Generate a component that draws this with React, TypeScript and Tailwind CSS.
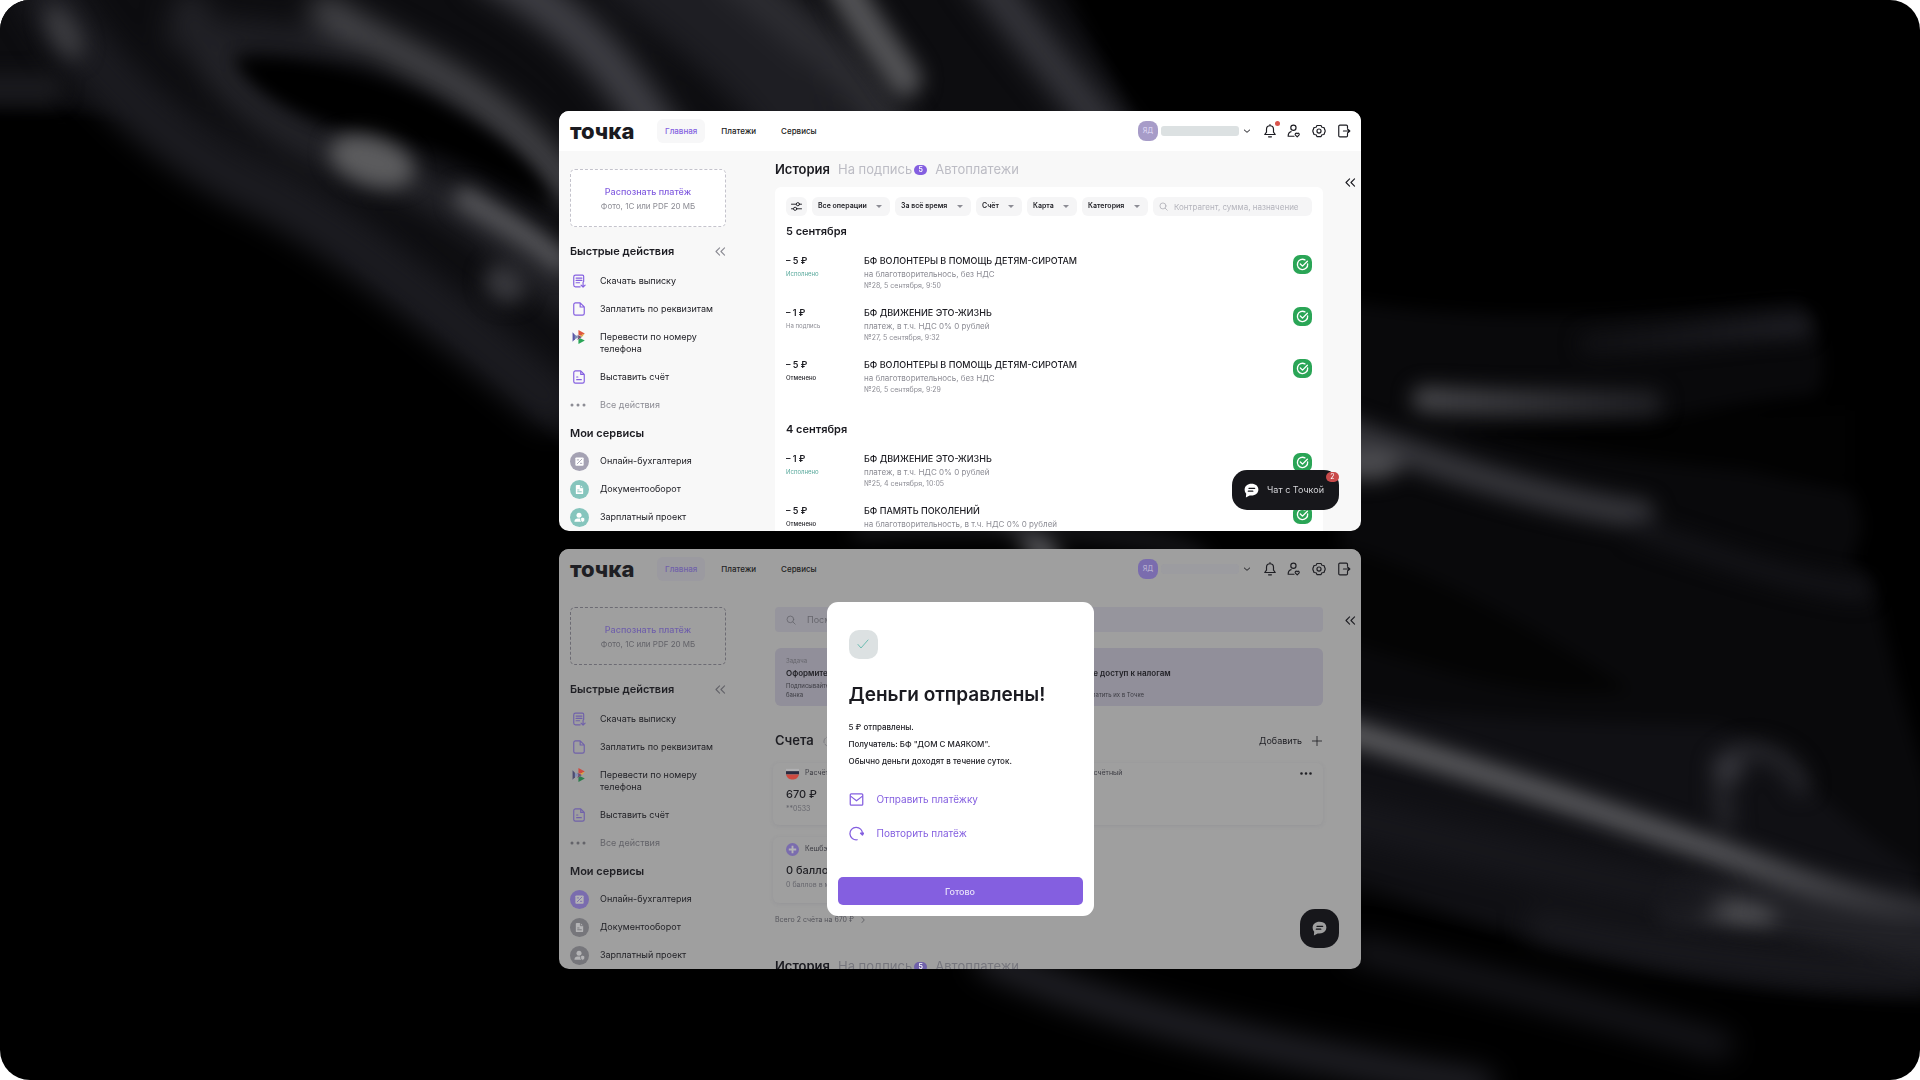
import React from "react";

const purple = "text-[var(--accent)]";

const lightTheme =
  "bg-[#f8f8f8] text-[#1b1b21] [--bar:#ffffff] [--pill:#f7f7f8] [--box:#ffffff] [--accent:#845fe0] [--muted:#8c8c94] [--faint:#bcbcc4] [--dash:#c4c3cc] [--avatar:#a79cc8] [--avatartext:#d9d2f0] [--mask:#dce1e2] [--s1:#a5a2b3] [--s2:#86c5bd] [--glyph:#ffffff] [--r:#e0573f] [--g:#2aa556] [--b:#5b57a6]";
const dimTheme =
  "bg-[#9f9f9f] text-[#1f1f24] [--bar:#9f9f9f] [--pill:#9b9aa0] [--box:#9f9f9f] [--accent:#7061aa] [--muted:#636369] [--faint:#77777e] [--dash:#6c6b73] [--avatar:#7a6cae] [--avatartext:#b5aed0] [--mask:#9c9ca0] [--s1:#7a6cae] [--s2:#76767b] [--glyph:#b4b4b6] [--r:#cf4a40] [--g:#2b7d4c] [--b:#4d4b70]";

type IconProps = { className?: string; children: React.ReactNode; box?: string };
function Icon({ className = "size-[14px]", box = "0 0 24 24", children }: IconProps) {
  return (
    <svg aria-hidden="true" viewBox={box} className={"shrink-0 " + className} fill="none" stroke="currentColor" strokeWidth="2" strokeLinecap="round" strokeLinejoin="round">
      {children}
    </svg>
  );
}

function Blur({ id, amount }: { id: string; amount: number }) {
  return (
    <filter id={id} filterUnits="userSpaceOnUse" x="-100" y="-100" width="2120" height="1280" colorInterpolationFilters="sRGB">
      <feGaussianBlur stdDeviation={amount} />
    </filter>
  );
}

function Backdrop() {
  return (
    <svg aria-hidden="true" className="absolute inset-0 size-full" viewBox="0 0 1920 1080" preserveAspectRatio="xMidYMid slice" fill="none" strokeLinecap="round">
      <defs>
        <Blur id="edge" amount={8} />
        <Blur id="soft" amount={10} />
        <Blur id="mid" amount={14} />
        <linearGradient id="beam" gradientUnits="userSpaceOnUse" x1="1361" y1="736" x2="1920" y2="910">
          <stop offset="0" stopColor="#5c5c5f" /><stop offset="0.65" stopColor="#56565a" /><stop offset="1" stopColor="#2f2f34" />
        </linearGradient>
        <linearGradient id="glow" gradientUnits="userSpaceOnUse" x1="1400" y1="0" x2="1680" y2="0">
          <stop offset="0" stopColor="#4a4a4e" /><stop offset="1" stopColor="#1c1c20" />
        </linearGradient>
        <linearGradient id="ray" gradientUnits="userSpaceOnUse" x1="1570" y1="0" x2="1810" y2="0">
          <stop offset="0" stopColor="#101013" /><stop offset="1" stopColor="#202026" />
        </linearGradient>
      </defs>
      <g filter="url(#edge)">
        <path d="M-20 -20H1060L1140 130L1000 180H570V450C500 370 430 320 350 260C280 200 200 125 110 112L-20 108Z" fill="#0d0d10" />
        <path d="M1340 300C1500 325 1620 315 1800 300C1825 330 1828 380 1815 395C1740 400 1680 420 1620 422C1700 470 1790 478 1850 490C1868 520 1862 540 1850 560C1880 575 1880 620 1890 650C1900 700 1930 780 1930 800V1000C1700 1000 1500 930 1340 890Z" fill="#09090b" />
        <path d="M1340 700C1500 725 1640 722 1720 726C1800 760 1830 820 1920 870V990C1700 1000 1500 930 1340 870Z" fill="#101014" />
        <path d="M1340 545C1440 575 1540 630 1630 690C1540 705 1440 670 1340 640Z" fill="#040404" />
        <path d="M1450 430C1560 425 1640 420 1700 415L1850 410V478C1700 470 1560 450 1450 430Z" fill="#020202" />
      </g>
      <g filter="url(#mid)">
        <path d="M45 -10C85 60 150 130 240 180C310 210 380 260 550 400" stroke="#1b1b20" strokeWidth="54" />
        <path d="M190 10C210 80 280 140 380 170C440 190 500 230 570 300" stroke="#242429" strokeWidth="36" />
        <path d="M180 35C240 30 290 45 350 45" stroke="#202025" strokeWidth="30" />
        <path d="M325 10C400 60 490 80 570 190" stroke="#48484c" strokeWidth="30" />
        <path d="M490 -30C580 20 620 70 670 150" stroke="#3f3f45" strokeWidth="42" />
        <path d="M640 -30C720 30 780 80 820 150" stroke="#1e1e23" strokeWidth="80" />
        <path d="M730 -30C790 20 860 70 900 150" stroke="#2d2d32" strokeWidth="40" />
        <path d="M980 -30C1030 40 1060 70 1120 150" stroke="#36363c" strokeWidth="36" />
      </g>
      <g filter="url(#edge)">
        <path d="M235 58C300 55 390 75 450 112C520 150 545 180 552 210C500 180 450 150 400 140C340 130 260 105 235 58Z" fill="#000" />
      </g>
      <g filter="url(#soft)">
        <path d="M835 -30C860 20 890 55 905 80" stroke="#525255" strokeWidth="34" />
        <ellipse cx="64" cy="32" rx="14" ry="30" fill="#3c3c40" transform="rotate(-30 64 32)" />
        <ellipse cx="372" cy="161" rx="44" ry="24" fill="#5c5c5e" transform="rotate(18 372 161)" />
        <path d="M465 198C500 220 530 235 560 262" stroke="#58585c" strokeWidth="22" />
        <ellipse cx="505" cy="284" rx="22" ry="18" fill="#38383d" transform="rotate(35 505 284)" />
        <path d="M-30 88H50" stroke="#1b1b1f" strokeWidth="26" />
        <path d="M1590 344C1670 340 1740 328 1800 326" stroke="url(#ray)" strokeWidth="22" />
        <path d="M1425 399C1500 404 1570 402 1650 403" stroke="url(#glow)" strokeWidth="26" />
        <path d="M1340 430C1440 465 1540 500 1640 514" stroke="#333338" strokeWidth="30" />
        <ellipse cx="1368" cy="464" rx="34" ry="16" fill="#4b4b4f" />
        <path d="M1640 530C1700 550 1780 580 1860 590" stroke="#131317" strokeWidth="22" />
        <path d="M1726 820C1715 770 1730 745 1760 752C1785 758 1795 770 1800 785" stroke="#242429" strokeWidth="20" />
        <ellipse cx="1728" cy="768" rx="16" ry="16" fill="#34343a" />
        <path d="M1680 905C1760 900 1830 925 1950 955" stroke="#212126" strokeWidth="46" />
        <path d="M1320 724C1500 775 1660 832 1790 877C1840 893 1880 905 1950 914" stroke="url(#beam)" strokeWidth="24" />
        <ellipse cx="1736" cy="913" rx="42" ry="12" fill="#4f4f53" transform="rotate(8 1736 913)" />
        <path d="M1010 515L1050 560" stroke="#5c5c60" strokeWidth="22" />
        <path d="M860 530C960 520 1180 530 1200 560" stroke="#1a1a1e" strokeWidth="16" />
      </g>
      <g filter="url(#mid)">
        <path d="M1340 815C1480 850 1600 880 1700 900" stroke="#17171c" strokeWidth="40" />
        <path d="M1540 925C1640 950 1780 970 1960 975" stroke="#1b1b20" strokeWidth="26" />
        <path d="M1360 950C1480 980 1600 1010 1720 1045" stroke="#17171c" strokeWidth="26" />
        <path d="M990 960C1100 1010 1260 1050 1480 1085" stroke="#212127" strokeWidth="30" />
      </g>
    </svg>
  );
}

function Header({ alert }: { alert?: boolean }) {
  return (
    <header className="flex h-10 shrink-0 items-center bg-[var(--bar)] pl-[11px] pr-[10px]">
      <a href="#home" className="w-[87px] text-[22px] font-extrabold leading-6">точка</a>
      <nav className="flex items-center text-[8px] font-medium leading-6">
        <a href="#main" className={"rounded-md bg-[var(--pill)] px-2 " + purple}>Главная</a>
        <a href="#payments" className="ml-4">Платежи</a>
        <a href="#services" className="ml-[25px]">Сервисы</a>
      </nav>
      <div className="ml-auto flex items-center">
        <span className="flex size-5 items-center justify-center rounded-[8px] bg-[var(--avatar)] text-[7px] font-medium text-[var(--avatartext)]">ЯД</span>
        <span className="ml-[3px] h-[10px] w-[78px] rounded-[3px] bg-[var(--mask)]" />
        <button aria-label="Профиль" className="ml-1"><Icon className="size-2"><path d="m4 9 8 7 8-7" strokeWidth="3" /></Icon></button>
        <button aria-label="Уведомления" className="relative ml-[12px]">
          <Icon><path d="M12 3a6 6 0 0 0-6 6v5l-3 4h18l-3-4V9a6 6 0 0 0-6-6ZM12 1v2M9.500 22h5" /></Icon>
          {alert && <span className="absolute -right-[3px] -top-[3px] size-[5px] rounded-full bg-[#d9534a]" />}
        </button>
        <button aria-label="Сотрудники" className="ml-[10px]">
          <Icon><circle cx="11" cy="6.500" r="4.500" /><path d="M7 13c-4 1-5 4-5 8h10M17.500 22l-3-3c-1.500-2 1-4.500 3-2.500 2-2 4.500.5 3 2.500Z" /></Icon>
        </button>
        <button aria-label="Настройки" className="ml-[11px]">
          <Icon><path d="M8.500 2.500h7l1.500 3 3.500.5 2 5v2l-2 5-3.500.5-1.500 3h-7l-1.500-3-3.500-.5-2-5v-2l2-5 3.500-.5Z" /><circle cx="12" cy="12" r="3.500" /></Icon>
        </button>
        <button aria-label="Выйти" className="ml-[11px]">
          <Icon><path d="M18 7V4a2 2 0 0 0-2-2H5a2 2 0 0 0-2 2v16a2 2 0 0 0 2 2h11a2 2 0 0 0 2-2v-3M11 12h11M18 8.500l4 3.500-4 3.500" /></Icon>
        </button>
      </div>
    </header>
  );
}

function Chevrons({ className }: { className?: string }) {
  return <Icon className={className} box="0 0 24 20"><path d="M10 2 2 10l8 8M21 2l-8 8 8 8" strokeWidth="2.500" /></Icon>;
}

const quick = [
  { label: "Скачать выписку", icon: <Icon className={"size-[14px] " + purple}><path d="M20 13V4a2 2 0 0 0-2-2H6a3 3 0 0 0-3 3v14a3 3 0 0 0 3 3h8M7 7h10M7 11h10M7 15h6M19 14v8M15.500 19l3.500 3.500 3.500-3.500" /></Icon> },
  { label: "Заплатить по реквизитам", icon: <Icon className={"size-[14px] " + purple}><path d="M14 1.500H6a3 3 0 0 0-3 3v15a3 3 0 0 0 3 3h12a3 3 0 0 0 3-3V8.500ZM14 1.500v7h7" /></Icon> },
  {
    label: "Перевести по номеру телефона",
    icon: (
      <svg aria-hidden="true" viewBox="0 0 24 24" className="size-[14px] shrink-0">
        <path d="M1 4v16l4-4V8Z" fill="var(--b)" /><path d="m5 8 7 4-7 4Z" fill="#7f8fb8" />
        <path d="M11 0v8l3 2 8-4Z" fill="var(--r)" /><path d="m14 10 8-4-5 6Z" fill="#e2a53c" />
        <path d="M11 24v-8l3-2 8 4Z" fill="var(--g)" /><path d="m9 8 8 4-8 5 2-5Z" fill="#6d4b70" />
      </svg>
    ),
  },
  { label: "Выставить счёт", icon: <Icon className={"size-[14px] " + purple}><path d="M15 1.500H6a3 3 0 0 0-3 3v15a3 3 0 0 0 3 3h12a3 3 0 0 0 3-3V7.500ZM15 1.500v6h6M8 12h2M8 16.500h8" /></Icon> },
];

const services = [
  { label: "Онлайн-бухгалтерия", tone: "bg-[var(--s1)]", icon: <><rect x="3" y="3" width="18" height="18" rx="2" fill="var(--glyph)" stroke="none" /><path d="m7 17 10-10M7 8.500h3M14 16h3" className="stroke-[var(--s1)]" /></> },
  { label: "Документооборот", tone: "bg-[var(--s2)]", icon: <><path d="M4 4a2 2 0 0 1 2-2h8l6 6v12a2 2 0 0 1-2 2H6a2 2 0 0 1-2-2Z" fill="var(--glyph)" stroke="none" /><path d="M14 3v5h5M8 13h3M8 17h8" className="stroke-[var(--s2)]" /></> },
  { label: "Зарплатный проект", tone: "bg-[var(--s2)]", icon: <><circle cx="11" cy="7" r="5.500" fill="var(--glyph)" stroke="none" /><path d="M1 21c0-6 4-7 10-7s6 1 6 7Z" fill="var(--glyph)" stroke="none" /><path d="M19 11.500 23.500 13v4c0 3-2 4.500-4.500 5.500-2.500-1-4.500-2.500-4.500-5.500v-4Z" fill="var(--glyph)" className="stroke-[var(--s2)]" /></> },
];

function Sidebar() {
  return (
    <aside className="ml-[11px] w-[156px] shrink-0 pt-[18px]">
      <button className="flex h-[58px] w-full flex-col items-center justify-center rounded-[5px] border border-dashed border-[var(--dash)] bg-[var(--box)] pt-0.5">
        <span className={"text-[9px] font-medium leading-[14px] " + purple}>Распознать платёж</span>
        <span className="text-[8px] leading-[14px] text-[var(--muted)]">Фото, 1С или PDF 20 МБ</span>
      </button>
      <div className="mb-1.5 mt-[14px] flex h-5 items-center justify-between">
        <h2 className="text-[11px] font-semibold">Быстрые действия</h2>
        <button aria-label="Свернуть" className="text-[var(--muted)]"><Chevrons className="h-[9px] w-[11px]" /></button>
      </div>
      <ul className="text-[9px] leading-3">
        {quick.map((q) => (
          <li key={q.label}>
            <a href="#action" className="flex items-start py-2">
              <span className="-my-px mr-[11px] flex w-[19px] shrink-0 justify-start pl-0.5">{q.icon}</span>
              <span>{q.label}</span>
            </a>
          </li>
        ))}
        <li>
          <a href="#all" className="flex items-center py-2 text-[var(--muted)]">
            <Icon className="mr-[14px] h-1 w-4" box="0 0 32 8"><path d="M4 4h.01M16 4h.01M28 4h.01" strokeWidth="6" /></Icon>
            Все действия
          </a>
        </li>
      </ul>
      <h2 className="mb-1 mt-1 text-[11px] font-semibold leading-5">Мои сервисы</h2>
      <ul className="text-[9px] leading-3">
        {services.map((s) => (
          <li key={s.label}>
            <a href="#service" className="flex h-7 items-center">
              <span className={"mr-[11px] flex size-[19px] items-center justify-center rounded-full " + s.tone}>
                <Icon className="size-[11px]">{s.icon}</Icon>
              </span>
              {s.label}
            </a>
          </li>
        ))}
      </ul>
    </aside>
  );
}

function Tabs() {
  return (
    <div className="flex h-[22px] shrink-0 items-center text-[13px] text-[var(--faint)]">
      <button className={"font-semibold text-[#1b1b21]"}>История</button>
      <button className="ml-2 flex items-center">
        На подпись
        <span className="ml-0.5 flex h-[10px] w-[13px] items-center justify-center rounded-[5px] bg-[var(--accent)] text-[7px] font-semibold text-white">5</span>
      </button>
      <button className="ml-2">Автоплатежи</button>
    </div>
  );
}

function Filter({ label }: { label: string }) {
  return (
    <span className="relative flex shrink-0">
      <select aria-label={label} className="h-[19px] appearance-none rounded-[6px] bg-[#f5f5f6] pl-[6px] pr-[23px] text-[7px] font-semibold">
        <option>{label}</option>
      </select>
      <svg aria-hidden="true" viewBox="0 0 12 6" className="pointer-events-none absolute right-2 top-2 h-[3px] w-[6px]"><path d="M0 0h12L6 6Z" fill="#8c8c94" /></svg>
    </span>
  );
}

function SearchIcon({ className }: { className: string }) {
  return <Icon className={className}><circle cx="10.500" cy="10.500" r="8" /><path d="m16.500 16.500 5.500 5.500" /></Icon>;
}

const days = [
  {
    title: "5 сентября",
    rows: [
      { sum: "– 5 ₽", status: "Исполнено", tone: "text-[#57a89b]", name: "БФ ВОЛОНТЕРЫ В ПОМОЩЬ ДЕТЯМ-СИРОТАМ", note: "на благотворительнось, без НДС", meta: "№28, 5 сентября, 9:50" },
      { sum: "– 1 ₽", status: "На подпись", tone: "text-[#8c8c94]", name: "БФ ДВИЖЕНИЕ ЭТО-ЖИЗНЬ", note: "платеж, в т.ч. НДС 0% 0 рублей", meta: "№27, 5 сентября, 9:32" },
      { sum: "– 5 ₽", status: "Отменено", tone: "text-[#1b1b21] font-medium", name: "БФ ВОЛОНТЕРЫ В ПОМОЩЬ ДЕТЯМ-СИРОТАМ", note: "на благотворительнось, без НДС", meta: "№26, 5 сентября, 9:29" },
    ],
  },
  {
    title: "4 сентября",
    rows: [
      { sum: "– 1 ₽", status: "Исполнено", tone: "text-[#57a89b]", name: "БФ ДВИЖЕНИЕ ЭТО-ЖИЗНЬ", note: "платеж, в т.ч. НДС 0% 0 рублей", meta: "№25, 4 сентября, 10:05" },
      { sum: "– 5 ₽", status: "Отменено", tone: "text-[#1b1b21] font-medium", name: "БФ ПАМЯТЬ ПОКОЛЕНИЙ", note: "на благотворительность, в т.ч. НДС 0% 0 рублей", meta: "" },
    ],
  },
];

function History() {
  return (
    <>
      <Tabs />
      <section className="mt-1.5 rounded-t-[6px] bg-white px-[11px] pt-[10px]">
        <div className="flex gap-[5px]">
          <button aria-label="Фильтры" className="flex h-[19px] w-[21px] items-center justify-center rounded-[6px] bg-[#f5f5f6]">
            <Icon className="size-[11px]"><path d="M1 7h10M19 7h4M1 17h4M13 17h10" /><circle cx="15" cy="7" r="3.500" /><circle cx="9" cy="17" r="3.500" /></Icon>
          </button>
          {["Все операции", "За всё время", "Счёт", "Карта", "Категория"].map((f) => <Filter key={f} label={f} />)}
          <label className="flex h-[19px] min-w-0 flex-1 items-center rounded-[6px] bg-[#f5f5f6] px-[6px] text-[#a9a9b1]">
            <SearchIcon className="mr-[6px] size-[9px]" />
            <input aria-label="Поиск по операциям" placeholder="Контрагент, сумма, назначение" className="min-w-0 flex-1 bg-transparent text-[8px] placeholder:text-[#b4b4bc] outline-none" />
          </label>
        </div>
        {days.map((d) => (
          <div key={d.title} className="mb-[22px]">
            <h3 className="mt-[5px] text-[11px] font-semibold leading-5">{d.title}</h3>
            <ul>
              {d.rows.map((r, i) => (
                <li key={i} className="flex h-[52px] pt-[13px]">
                  <div className="w-[78px] shrink-0">
                    <p className="text-[9px] font-semibold leading-[14px]">{r.sum}</p>
                    <p className={"text-[6px] leading-3 " + r.tone}>{r.status}</p>
                  </div>
                  <div className="min-w-0 flex-1 text-[#8c8c94]">
                    <p className="text-[9px] font-medium leading-[14px] text-[#1b1b21]">{r.name}</p>
                    <p className="text-[8px] leading-3">{r.note}</p>
                    {r.meta && <p className="text-[7px] leading-3">{r.meta}</p>}
                  </div>
                  <span className="mt-px flex size-[19px] items-center justify-center rounded-[7px] bg-[#2aa556] text-white">
                    <Icon className="size-[13px]"><path d="M21.500 11a9.500 9.500 0 1 1-5-7.500M8 11l4 4 9-9" strokeWidth="2.500" /></Icon>
                  </span>
                </li>
              ))}
            </ul>
          </div>
        ))}
      </section>
    </>
  );
}

const card = "min-w-0 flex-1 rounded-[6px] pl-[13px] pr-[11px] shadow-[0_1px_4px_rgba(80,80,110,0.12)]";

function Accounts() {
  return (
    <div className="flex flex-col">
      <label className="mt-2.5 flex h-[25px] items-center rounded-[4px] bg-[#96959d] pl-[11px] text-[#66666d]">
        <SearchIcon className="mr-[11px] size-[10px]" />
        <input aria-label="Поиск" placeholder="Посмотреть" className="min-w-0 flex-1 bg-transparent text-[9px] placeholder:text-[#66666d] outline-none" />
      </label>
      <div className="mt-4 flex h-[58px] rounded-[6px] bg-[#918f9a] pt-2 text-[6px] leading-[9px] text-[#3c3c43]">
        <article className="flex-1 pl-[11px]">
          <p className="text-[#66666d]">Задача</p>
          <h3 className="my-[2px] text-[8px] font-semibold leading-3 text-[#1f1f24]">Оформите карту</h3>
          <p>Подписывайте договор</p>
          <p>банка</p>
        </article>
        <article className="flex-1 pl-[11px]">
          <p className="text-[#66666d]">Задача</p>
          <h3 className="my-[2px] text-[8px] font-semibold leading-3 text-[#1f1f24]">Откройте доступ к налогам</h3>
          <p>Удобно</p>
          <p>Сможете платить их в Точке</p>
        </article>
      </div>
      <div className="mt-6 flex h-[22px] items-center">
        <h2 className="text-[13px] font-semibold">Счета</h2>
        <Icon className="ml-[9px] size-[11px] text-[#77777e]"><circle cx="12" cy="12" r="10" strokeDasharray="10 4" /></Icon>
        <button className="ml-auto flex items-center gap-[10px] pr-px text-[9px]">
          Добавить
          <Icon className="size-[10px]"><path d="M12 1v22M1 12h22" /></Icon>
        </button>
      </div>
      <div className="-ml-0.5 mt-[11px] flex h-[62px] gap-[10px]">
        {["**0533", ""].map((n) => (
          <article key={n} className={card}>
            <div className="flex h-[20px] items-center text-[7px] text-[#3c3c43]">
              <svg aria-hidden="true" viewBox="0 0 14 14" className="mr-[6px] size-[13px]"><path d="M0 2h14v2.500H0Z" fill="#b0b0b2" /><path d="M0 4.500h14V8H0Z" fill="#2a2b40" /><path d="M0 8h14c-1 4-4 5.500-7 5.500S1 12 0 8Z" fill="#cf4a40" /></svg>
              Расчётный
              {!n && <button aria-label="Ещё" className="ml-auto text-[#1f1f24]"><Icon className="h-[3px] w-3" box="0 0 32 8"><path d="M4 4h.01M16 4h.01M28 4h.01" strokeWidth="7" /></Icon></button>}
            </div>
            {n && <><p className="mt-[3px] text-[11px] font-medium leading-4">670 ₽</p><p className="text-[7px] leading-[14px] text-[#66666d]">{n}</p></>}
          </article>
        ))}
      </div>
      <div className="-ml-0.5 mt-[12px] flex h-[66px]">
        <article className={card + " max-w-[270px] pt-0.5"}>
          <div className="flex h-[20px] items-center text-[7px] text-[#3c3c43]">
            <svg aria-hidden="true" viewBox="0 0 14 14" className="mr-[6px] size-[13px]"><circle cx="7" cy="7" r="7" fill="#7a6cae" /><path d="M7 3v8M3 7h8" stroke="#b4b4b6" strokeWidth="2" /></svg>
            Кешбэк
          </div>
          <p className="mt-[3px] text-[11px] font-medium leading-4">0 баллов</p>
          <p className="text-[7px] leading-[14px] text-[#66666d]">0 баллов в месяц</p>
        </article>
      </div>
      <a href="#accounts" className="mb-[26px] mt-[7px] flex h-5 items-center gap-[6px] text-[7px] text-[#54545b]">
        Всего 2 счёта на 670 ₽
        <Icon className="size-[6px]"><path d="m8 2 9 10-9 10" strokeWidth="3" /></Icon>
      </a>
      <Tabs />
    </div>
  );
}

function ChatIcon({ className }: { className: string }) {
  return (
    <svg aria-hidden="true" viewBox="0 0 24 24" className={className}>
      <path d="M12 1C5.500 1 1 5 1 10.500c0 3 1 5 2.500 6.500L3 23l6-3c9 1 14-3.500 14-9.500S18.500 1 12 1Z" fill="currentColor" />
      <path d="M8 8.500h9M7 13h7" stroke="#17171b" strokeWidth="2.200" strokeLinecap="round" />
    </svg>
  );
}

function Screen({ dim, children, overlay }: { dim?: boolean; children: React.ReactNode; overlay: React.ReactNode }) {
  return (
    <section className={"relative flex aspect-[802/420] w-full max-w-[802px] flex-col overflow-hidden rounded-[10px] " + (dim ? dimTheme : lightTheme)}>
      <Header alert={!dim} />
      <div className="flex min-h-0 flex-1">
        <Sidebar />
        <main className="ml-[49px] min-w-0 flex-1 pt-2">{children}</main>
        <div className="w-[38px] shrink-0 pl-[22px] pt-[27px]">
          <button aria-label="Открыть панель" className="flex"><Chevrons className="h-[9px] w-[11px]" /></button>
        </div>
      </div>
      {overlay}
    </section>
  );
}

function SuccessDialog() {
  return (
    <div className="absolute inset-0 flex items-center justify-center">
      <div role="dialog" aria-labelledby="sent" className="w-[267px] rounded-[11px] bg-white px-[11px] pb-[11px] pt-7 text-[#1b1b21]">
        <div className="px-[11px]">
          <span className="flex size-[29px] items-center justify-center rounded-[10px] bg-[#dce1e2] text-[#6cbcb1]">
            <Icon className="size-3"><path d="m2 13 6 7L22 4" /></Icon>
          </span>
          <h1 id="sent" className="mt-6 text-[19px] font-semibold leading-6">Деньги отправлены!</h1>
          <div className="mt-[12px] text-[8px] font-medium leading-[17px]">
            <p>5 ₽ отправлены.</p>
            <p>Получатель: БФ "ДОМ С МАЯКОМ".</p>
            <p>Обычно деньги доходят в течение суток.</p>
          </div>
          <div className="mb-[26px] mt-[13px] flex flex-col items-start text-[10px] text-[#845fe0]">
            <button className="flex h-[34px] items-center gap-[13px]">
              <Icon className="size-[15px]"><rect x="2" y="3" width="20" height="18" rx="1.500" /><path d="m3 7 9 7 9-7" /></Icon>
              Отправить платёжку
            </button>
            <button className="flex h-[34px] items-center gap-[13px]">
              <Icon className="size-[15px]"><path d="M13 22A10 10 0 1 1 21.500 12.500M18.500 11.500h5l-2 3Z" /></Icon>
              Повторить платёж
            </button>
          </div>
        </div>
        <button className="h-7 w-full rounded-[5px] bg-[#845fe0] text-[9px] font-medium text-[#e9e2fa]">Готово</button>
      </div>
    </div>
  );
}

export default function App() {
  return (
    <div className="min-h-screen bg-white">
      <div className="relative flex min-h-screen flex-col items-center justify-center gap-[18px] overflow-hidden rounded-[30px] bg-black font-['Inter',sans-serif]">
        <Backdrop />
        <Screen
          overlay={
            <button className="absolute bottom-[21px] right-[22px] flex h-10 items-center gap-2 rounded-[15px] bg-[#17171b] pl-3 pr-[15px] text-[9px] text-[#d6d6da]">
              <ChatIcon className="size-[15px] text-white" />
              Чат с Точкой
              <span className="absolute right-0 top-0.5 flex h-[10px] w-[13px] items-center justify-center rounded-[5px] bg-[#c94b4b] text-[7px] text-white">2</span>
            </button>
          }
        >
          <History />
        </Screen>
        <Screen
          dim
          overlay={
            <>
              <button aria-label="Чат" className="absolute bottom-[21px] right-[22px] flex size-[39px] items-center justify-center rounded-[15px] bg-[#17171b]">
                <ChatIcon className="size-[15px] text-[#9f9f9f]" />
              </button>
              <SuccessDialog />
            </>
          }
        >
          <Accounts />
        </Screen>
      </div>
    </div>
  );
}
